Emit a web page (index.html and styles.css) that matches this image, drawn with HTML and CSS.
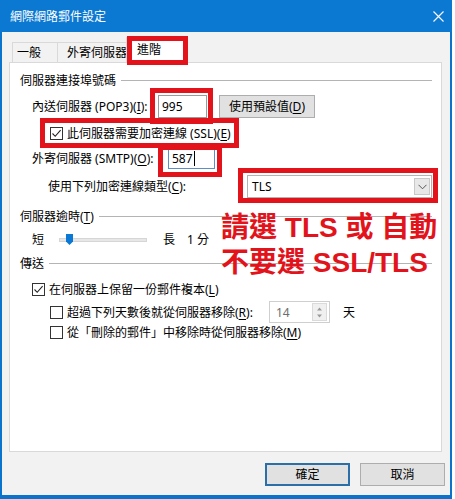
FILE: index.html
```html
<!DOCTYPE html>
<html lang="zh-Hant">
<head>
    <meta charset="UTF-8">
    <meta name="viewport" content="width=device-width, initial-scale=1.0">
    <title>網際網路郵件設定</title>
    <link rel="stylesheet" href="styles.css">
</head>
<body>
    <div class="window">
        <div class="titlebar">
            <span class="title">網際網路郵件設定</span>
            <svg class="close" width="11" height="11" viewBox="0 0 11 11">
                <path d="M0.5 0.5L10.5 10.5M10.5 0.5L0.5 10.5" stroke="#fff" stroke-width="1.1" fill="none"/>
            </svg>
        </div>

        <div class="tabs">
            <div class="tab tab-general">一般</div>
            <div class="tab tab-outgoing">外寄伺服器</div>
            <div class="tab tab-advanced active">進階</div>
        </div>

        <div class="panel">
            <div class="group g-ports">伺服器連接埠號碼</div>

            <div class="row r-pop3">
                <span class="lbl lbl-pop3">內送伺服器 (POP3)(<u>I</u>):</span>
                <div class="textbox tb-pop3">995</div>
                <button class="btn btn-default">使用預設值(<u>D</u>)</button>
            </div>

            <div class="row r-ssl">
                <span class="cb checked">
                    <svg width="11" height="11" viewBox="0 0 11 11"><path d="M1.5 5.5L4.2 8.3L9.6 2.2" stroke="#222" stroke-width="1.1" fill="none"/></svg>
                </span>
                <span>此伺服器需要加密連線 (SSL)(<u>E</u>)</span>
            </div>

            <div class="row r-smtp">
                <span class="lbl lbl-smtp">外寄伺服器 (SMTP)(<u>O</u>):</span>
                <div class="textbox tb-smtp">587<span class="caret"></span></div>
            </div>

            <div class="row r-enc">
                <span class="lbl lbl-enc">使用下列加密連線類型(<u>C</u>):</span>
                <div class="select">
                    <span class="select-value">TLS</span>
                    <span class="select-arrow">
                        <svg width="9" height="6" viewBox="0 0 9 6"><path d="M0.5 0.8L4.5 4.8L8.5 0.8" stroke="#555" stroke-width="1" fill="none"/></svg>
                    </span>
                </div>
            </div>

            <div class="group g-timeout">伺服器逾時(<u>T</u>)</div>

            <div class="row r-slider">
                <span>短</span>
                <div class="track">
                    <svg class="thumb" width="7" height="11" viewBox="0 0 7 11"><path d="M0 0H7V7.5L3.5 11L0 7.5Z" fill="#0a78d4"/></svg>
                </div>
                <span class="long">長</span>
                <span class="minutes">1 分</span>
            </div>

            <div class="group g-send">傳送</div>

            <div class="row r-keep">
                <span class="cb checked">
                    <svg width="11" height="11" viewBox="0 0 11 11"><path d="M1.5 5.5L4.2 8.3L9.6 2.2" stroke="#222" stroke-width="1.1" fill="none"/></svg>
                </span>
                <span>在伺服器上保留一份郵件複本(<u>L</u>)</span>
            </div>

            <div class="row r-days">
                <span class="cb"></span>
                <span class="lbl lbl-days">超過下列天數後就從伺服器移除(<u>R</u>):</span>
                <div class="spin">
                    <span class="spin-value">14</span>
                    <span class="spin-arrows">
                        <svg width="7" height="13" viewBox="0 0 7 13"><path d="M3.5 1.5L6 4.5H1Z M1 8.5H6L3.5 11.5Z" fill="#9a9a9a"/></svg>
                    </span>
                </div>
                <span class="days">天</span>
            </div>

            <div class="row r-deleted">
                <span class="cb"></span>
                <span>從「刪除的郵件」中移除時從伺服器移除(<u>M</u>)</span>
            </div>
        </div>

        <div class="actions">
            <button class="btn btn-ok">確定</button>
            <button class="btn btn-cancel">取消</button>
        </div>

        <!-- red annotations drawn over the dialog -->
        <div class="mark mark-tab"></div>
        <div class="mark mark-pop3"></div>
        <div class="mark mark-ssl"></div>
        <div class="mark mark-smtp"></div>
        <div class="mark mark-enc"></div>
        <div class="note">請選 TLS 或 自動<br>不要選 SSL/TLS</div>
    </div>
</body>
</html>
```

FILE: styles.css
```css
body {
    margin: 0;
    background: #fff;
    font-family: "Noto Sans", "Noto Sans CJK TC", sans-serif;
    font-size: 12px;
    line-height: 17px;
    color: #000;
}
u {
    text-decoration-thickness: 1px;
    text-underline-offset: 2px;
}
.window {
    position: relative;
    box-sizing: border-box;
    width: 452px;
    height: 499px;
    background: #f2f2f2;
    border: 2px solid #0a74cc;
    border-top: 0;
    border-bottom-width: 4px;
}
.titlebar {
    display: flex;
    align-items: center;
    height: 32px;
    margin: 0 -2px;
    padding: 0 8px 0 10px;
    background: #0b78d2;
    color: #fff;
}
.title {
    font-size: 12px;
}
.close {
    margin-left: auto;
    margin-right: 0;
}

/* tabs */
.tabs {
    display: flex;
    align-items: flex-end;
    height: 30px;
    padding-left: 10px;
}
.tab {
    box-sizing: border-box;
    height: 20px;
    line-height: 19px;
    border: 1px solid #d9d9d9;
    border-bottom: 0;
    background: #f2f2f2;
}
.tab-general {
    width: 46px;
    padding-left: 4px;
}
.tab-outgoing {
    width: 71px;
    margin-left: -1px;
    padding-left: 9px;
}
.tab-advanced.active {
    position: relative;
    width: 58px;
    height: 26px;
    line-height: 24px;
    margin-left: -2px;
    margin-bottom: -1px;
    padding-left: 10px;
    background: #fff;
}

/* tab page */
.panel {
    box-sizing: border-box;
    width: 433px;
    height: 390px;
    margin-left: 7px;
    padding: 9px 9px 0 10px;
    background: #fff;
    border: 1px solid #d9d9d9;
}
.group {
    display: flex;
    align-items: center;
    height: 17px;
}
.group::after {
    content: "";
    flex: 1;
    height: 1px;
    margin-left: 5px;
    background: #b4b4b4;
}
.g-timeout {
    margin-top: 10px;
}
.g-send {
    margin-top: 7px;
}
.row {
    display: flex;
    align-items: center;
    height: 17px;
}
.lbl {
    flex: none;
}
.r-pop3 {
    height: 24px;
    margin-top: 5px;
    padding-left: 12px;
}
.lbl-pop3 {
    width: 126px;
}
.r-ssl {
    height: 18px;
    margin-top: 6px;
    padding-left: 30px;
}
.r-smtp {
    height: 22px;
    margin-top: 5px;
    padding-left: 12px;
}
.lbl-smtp {
    width: 136px;
}
.r-enc {
    height: 23px;
    margin-top: 6px;
    padding-left: 28px;
}
.lbl-enc {
    width: 199px;
}
.r-slider {
    margin-top: 6px;
    padding-left: 12px;
}
.r-keep {
    margin-top: 9px;
    padding-left: 12px;
}
.r-days {
    height: 22px;
    margin-top: 3px;
    padding-left: 30px;
}
.lbl-days {
    width: 202px;
}
.r-deleted {
    margin-top: 1px;
    padding-left: 30px;
}

/* controls */
.textbox {
    box-sizing: border-box;
    display: flex;
    align-items: center;
    height: 23px;
    padding-left: 3px;
    background: #fff;
    border: 1px solid #9a9a9a;
}
.tb-pop3 {
    width: 49px;
}
.tb-smtp {
    width: 47px;
    height: 22px;
    border-color: #5d8fc4;
}
.caret {
    width: 1px;
    height: 15px;
    margin-left: 1px;
    background: #000;
}
.btn {
    box-sizing: border-box;
    height: 23px;
    padding: 0;
    font: inherit;
    color: #000;
    background: #e1e1e1;
    border: 1px solid #adadad;
}
.btn-default {
    width: 96px;
    margin-left: 12px;
}
.cb {
    box-sizing: border-box;
    flex: none;
    display: flex;
    align-items: center;
    justify-content: center;
    width: 13px;
    height: 13px;
    margin-right: 4px;
    background: #fff;
    border: 1px solid #333;
}
.select {
    box-sizing: border-box;
    display: flex;
    align-items: center;
    width: 185px;
    height: 23px;
    padding: 0 1px 0 4px;
    background: #fff;
    border: 1px solid #b3b3b3;
}
.select-value {
    flex: 1;
}
.select-arrow {
    box-sizing: border-box;
    display: flex;
    align-items: center;
    justify-content: center;
    width: 16px;
    height: 17px;
    background: #e8e8e8;
    border: 1px solid #c8c8c8;
}
.track {
    position: relative;
    box-sizing: border-box;
    width: 88px;
    height: 4px;
    margin-left: 15px;
    background: #e7e7e7;
    border: 1px solid #d6d6d6;
}
.thumb {
    position: absolute;
    left: 6px;
    top: -5px;
}
.long {
    margin-left: 16px;
}
.minutes {
    margin-left: 12px;
}
.spin {
    box-sizing: border-box;
    display: flex;
    align-items: center;
    width: 61px;
    height: 22px;
    padding: 0 2px 0 6px;
    background: #fff;
    border: 1px solid #cfcfcf;
}
.spin-value {
    flex: 1;
    color: #6d6d6d;
}
.spin-arrows {
    box-sizing: border-box;
    display: flex;
    align-items: center;
    justify-content: center;
    width: 15px;
    height: 18px;
    background: #f0f0f0;
    border: 1px solid #dadada;
}
.days {
    margin-left: 13px;
}

/* dialog buttons */
.actions {
    display: flex;
    justify-content: flex-end;
    gap: 10px;
    margin-top: 11px;
    padding-right: 5px;
}
.btn-ok,
.btn-cancel {
    width: 85px;
    height: 23px;
}
.btn-ok {
    border: 2px solid #2b6ea8;
}

/* annotations */
.mark {
    position: absolute;
    box-sizing: border-box;
    border: 5px solid #e3131b;
}
.mark-tab {
    left: 125px;
    top: 36px;
    width: 61px;
    height: 29px;
}
.mark-pop3 {
    left: 148px;
    top: 88px;
    width: 63px;
    height: 36px;
}
.mark-ssl {
    left: 38px;
    top: 118px;
    width: 199px;
    height: 30px;
}
.mark-smtp {
    left: 156px;
    top: 145px;
    width: 64px;
    height: 32px;
}
.mark-enc {
    left: 236px;
    top: 168px;
    width: 200px;
    height: 35px;
}
.note {
    position: absolute;
    left: 219px;
    top: 210px;
    font-family: "Liberation Sans", "Noto Sans CJK TC", sans-serif;
    font-size: 28px;
    font-weight: bold;
    line-height: 35px;
    color: #e3131b;
    white-space: nowrap;
}
```
